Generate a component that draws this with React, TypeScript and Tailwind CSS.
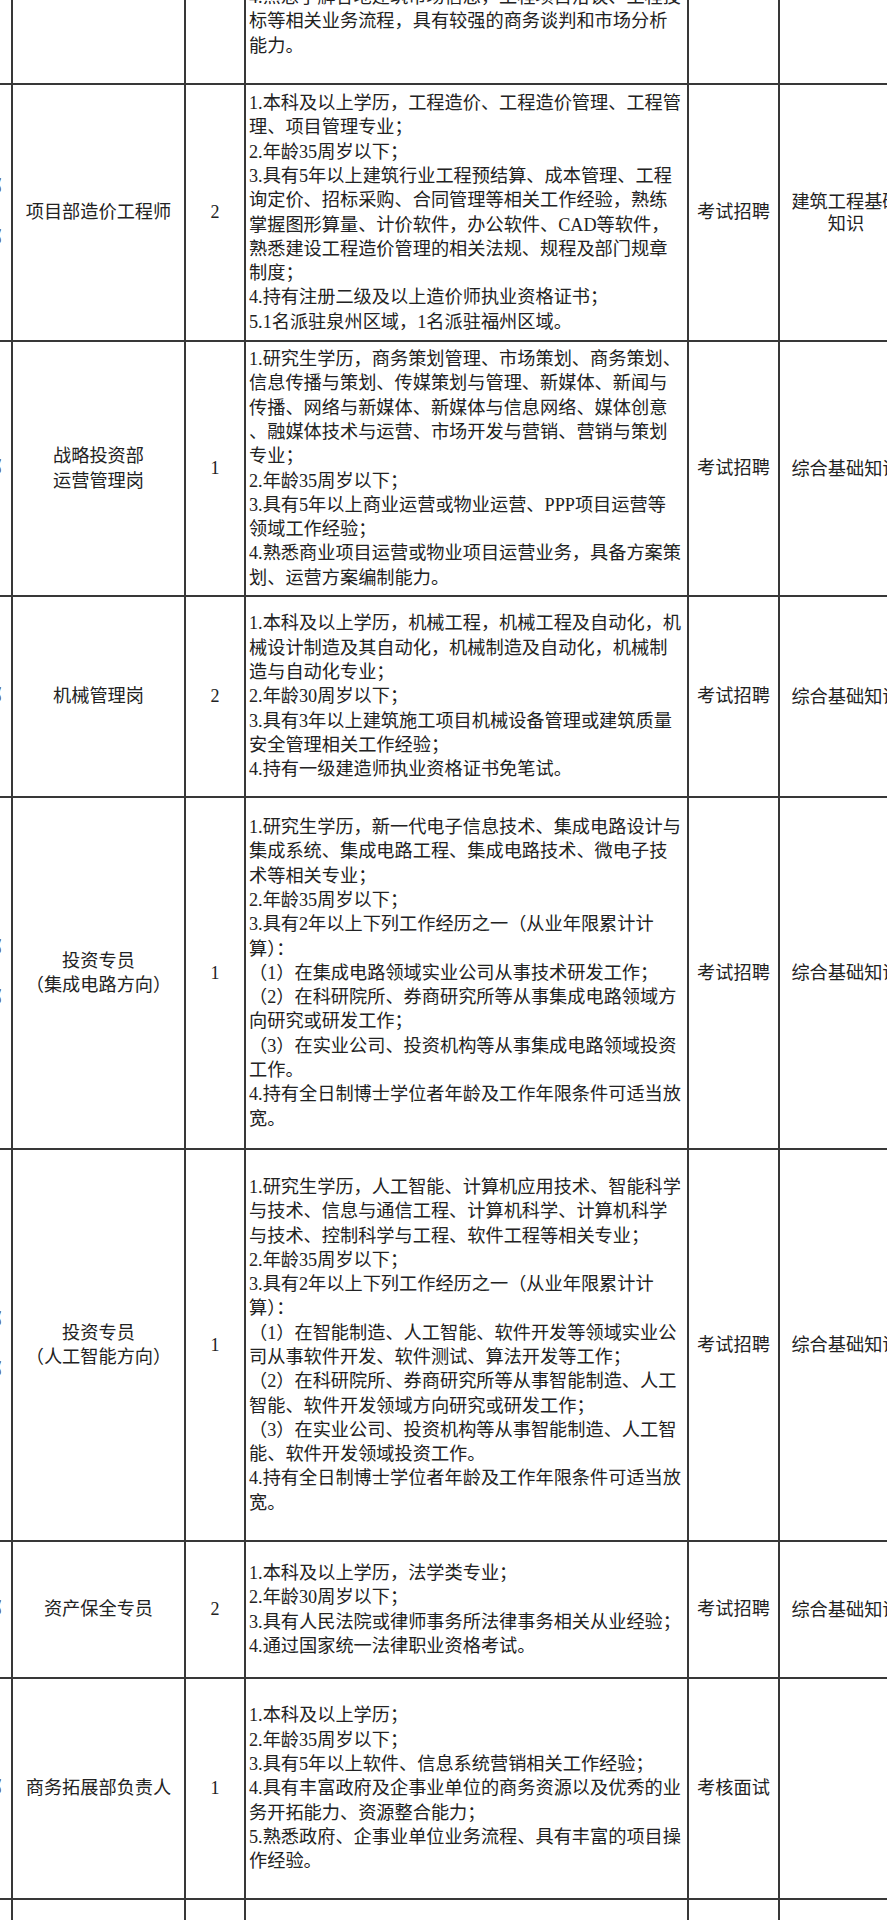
import React from "react";

type Row = {
  h: string;
  edge: string[];
  title: string[];
  count: string;
  lines: string[];
  method: string;
  subject: string[];
  clipTop?: boolean;
};

const rows: Row[] = [
  {
    h: "h-[85px]",
    edge: [],
    title: [],
    count: "",
    lines: [
      "4.熟悉了解各地建筑市场信息，工程项目洽谈、工程投",
      "标等相关业务流程，具有较强的商务谈判和市场分析",
      "能力。",
    ],
    method: "",
    subject: [],
    clipTop: true,
  },
  {
    h: "h-[257px]",
    edge: ["部", "部"],
    title: ["项目部造价工程师"],
    count: "2",
    lines: [
      "1.本科及以上学历，工程造价、工程造价管理、工程管",
      "理、项目管理专业；",
      "2.年龄35周岁以下；",
      "3.具有5年以上建筑行业工程预结算、成本管理、工程",
      "询定价、招标采购、合同管理等相关工作经验，熟练",
      "掌握图形算量、计价软件，办公软件、CAD等软件，",
      "熟悉建设工程造价管理的相关法规、规程及部门规章",
      "制度；",
      "4.持有注册二级及以上造价师执业资格证书；",
      "5.1名派驻泉州区域，1名派驻福州区域。",
    ],
    method: "考试招聘",
    subject: ["建筑工程基础", "知识"],
  },
  {
    h: "h-[255px]",
    edge: ["部"],
    title: ["战略投资部", "运营管理岗"],
    count: "1",
    lines: [
      "1.研究生学历，商务策划管理、市场策划、商务策划、",
      "信息传播与策划、传媒策划与管理、新媒体、新闻与",
      "传播、网络与新媒体、新媒体与信息网络、媒体创意",
      "、融媒体技术与运营、市场开发与营销、营销与策划",
      "专业；",
      "2.年龄35周岁以下；",
      "3.具有5年以上商业运营或物业运营、PPP项目运营等",
      "领域工作经验；",
      "4.熟悉商业项目运营或物业项目运营业务，具备方案策",
      "划、运营方案编制能力。",
    ],
    method: "考试招聘",
    subject: ["综合基础知识"],
  },
  {
    h: "h-[201px]",
    edge: ["部"],
    title: ["机械管理岗"],
    count: "2",
    lines: [
      "1.本科及以上学历，机械工程，机械工程及自动化，机",
      "械设计制造及其自动化，机械制造及自动化，机械制",
      "造与自动化专业；",
      "2.年龄30周岁以下；",
      "3.具有3年以上建筑施工项目机械设备管理或建筑质量",
      "安全管理相关工作经验；",
      "4.持有一级建造师执业资格证书免笔试。",
    ],
    method: "考试招聘",
    subject: ["综合基础知识"],
  },
  {
    h: "h-[352px]",
    edge: ["部", "部"],
    title: ["投资专员", "（集成电路方向）"],
    count: "1",
    lines: [
      "1.研究生学历，新一代电子信息技术、集成电路设计与",
      "集成系统、集成电路工程、集成电路技术、微电子技",
      "术等相关专业；",
      "2.年龄35周岁以下；",
      "3.具有2年以上下列工作经历之一（从业年限累计计",
      "算）：",
      "（1）在集成电路领域实业公司从事技术研发工作；",
      "（2）在科研院所、券商研究所等从事集成电路领域方",
      "向研究或研发工作；",
      "（3）在实业公司、投资机构等从事集成电路领域投资",
      "工作。",
      "4.持有全日制博士学位者年龄及工作年限条件可适当放",
      "宽。",
    ],
    method: "考试招聘",
    subject: ["综合基础知识"],
  },
  {
    h: "h-[392px]",
    edge: ["部", "部"],
    title: ["投资专员", "（人工智能方向）"],
    count: "1",
    lines: [
      "1.研究生学历，人工智能、计算机应用技术、智能科学",
      "与技术、信息与通信工程、计算机科学、计算机科学",
      "与技术、控制科学与工程、软件工程等相关专业；",
      "2.年龄35周岁以下；",
      "3.具有2年以上下列工作经历之一（从业年限累计计",
      "算）：",
      "（1）在智能制造、人工智能、软件开发等领域实业公",
      "司从事软件开发、软件测试、算法开发等工作；",
      "（2）在科研院所、券商研究所等从事智能制造、人工",
      "智能、软件开发领域方向研究或研发工作；",
      "（3）在实业公司、投资机构等从事智能制造、人工智",
      "能、软件开发领域投资工作。",
      "4.持有全日制博士学位者年龄及工作年限条件可适当放",
      "宽。",
    ],
    method: "考试招聘",
    subject: ["综合基础知识"],
  },
  {
    h: "h-[137px]",
    edge: ["部"],
    title: ["资产保全专员"],
    count: "2",
    lines: [
      "1.本科及以上学历，法学类专业；",
      "2.年龄30周岁以下；",
      "3.具有人民法院或律师事务所法律事务相关从业经验；",
      "4.通过国家统一法律职业资格考试。",
    ],
    method: "考试招聘",
    subject: ["综合基础知识"],
  },
  {
    h: "h-[221px]",
    edge: ["部"],
    title: ["商务拓展部负责人"],
    count: "1",
    lines: [
      "1.本科及以上学历；",
      "2.年龄35周岁以下；",
      "3.具有5年以上软件、信息系统营销相关工作经验；",
      "4.具有丰富政府及企事业单位的商务资源以及优秀的业",
      "务开拓能力、资源整合能力；",
      "5.熟悉政府、企事业单位业务流程、具有丰富的项目操",
      "作经验。",
    ],
    method: "考核面试",
    subject: [],
  },
  {
    h: "h-[40px]",
    edge: [],
    title: [],
    count: "",
    lines: [],
    method: "",
    subject: [],
  },
];

const cell = "border-r-2 border-b-2 border-[#383838] overflow-hidden";

function CenterCell({ lines }: { lines: string[] }) {
  return (
    <div className={`${cell} flex flex-col items-center justify-center`}>
      {lines.map((l, i) => (
        <div key={i} className="whitespace-nowrap">
          {l}
        </div>
      ))}
    </div>
  );
}

export default function App() {
  return (
    <div
      className="w-[887px] h-[1920px] overflow-hidden bg-white text-[#222] text-[18.2px] leading-[24.3px]"
      style={{ fontFamily: '"Liberation Serif", "Noto Sans CJK SC", serif' }}
    >
      <div className="flex w-[914px] flex-col">
        {rows.map((r, i) => (
          <div
            key={i}
            className={`grid grid-cols-[13px_173px_60px_443px_91px_134px] ${r.h}`}
          >
            {/* clipped column from the previous page section */}
            <div className={`${cell} flex flex-col items-end justify-center gap-[26px] pr-[9px] text-[#555]`}>
              {r.edge.map((c, j) => (
                <div key={j} className="whitespace-nowrap">
                  {c}
                </div>
              ))}
            </div>

            <CenterCell lines={r.title} />

            <div className={`${cell} flex items-center justify-center`}>
              <span className="text-[18px]">{r.count}</span>
            </div>

            <div
              className={`${cell} flex flex-col pl-[3px] ${
                r.clipTop ? "justify-end pb-[25px]" : "justify-center"
              }`}
            >
              {r.lines.map((l, j) => (
                <div key={j} className="whitespace-nowrap">
                  {l}
                </div>
              ))}
            </div>

            <CenterCell lines={r.method ? [r.method] : []} />

            <div className={`${cell} flex flex-col items-center justify-center leading-[22px]`}>
              {r.subject.map((l, j) => (
                <div key={j} className="whitespace-nowrap">
                  {l}
                </div>
              ))}
            </div>
          </div>
        ))}
      </div>
    </div>
  );
}
